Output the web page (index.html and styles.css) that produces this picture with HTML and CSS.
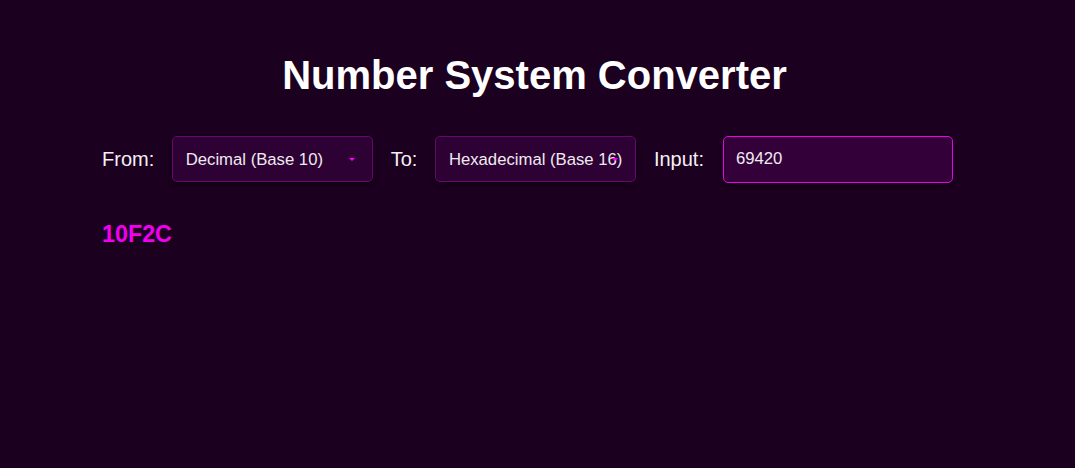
FILE: index.html
```html
<!DOCTYPE html>
<html lang="en">
<head>
<meta charset="utf-8">
<title>Number System Converter</title>
<link rel="stylesheet" href="styles.css">
</head>
<body>
<main class="app">
  <h1 class="title">Number System Converter</h1>
  <div class="controls">
    <label class="label" for="from">From:</label>
    <div class="select-wrap">
      <select id="from" class="select">
        <option>Decimal (Base 10)</option>
      </select>
      <span class="arrow"></span>
    </div>
    <label class="label" for="to">To:</label>
    <div class="select-wrap">
      <select id="to" class="select">
        <option>Hexadecimal (Base 16)</option>
      </select>
      <span class="arrow"></span>
    </div>
    <label class="label" for="inp">Input:</label>
    <input id="inp" class="input" type="text" value="69420">
  </div>
  <div class="result">10F2C</div>
</main>
</body>
</html>
```

FILE: styles.css
```css
html, body {
  margin: 0;
  padding: 0;
  height: 100%;
}
body {
  background: #1c0020;
  font-family: "Liberation Sans", Arial, sans-serif;
  color: #ffffff;
}
.app {
  width: 871px;
  margin: 0 auto;
  padding-top: 52px;
}
.title {
  margin: 0 0 37px 0;
  text-align: center;
  font-size: 40px;
  font-weight: bold;
  line-height: 46px;
  color: #ffffff;
  padding-right: 6px;
}
.controls {
  display: flex;
  align-items: center;
  height: 48px;
}
.label {
  font-size: 20px;
  color: #f6f0f6;
  margin-right: 17.5px;
}
.select-wrap {
  position: relative;
  margin-right: 18px;
}
.select {
  appearance: none;
  -webkit-appearance: none;
  width: 201px;
  height: 46px;
  box-sizing: border-box;
  background: #2d0133;
  border: 1px solid #66096e;
  border-radius: 5px;
  color: #f0eaf0;
  font-family: "Liberation Sans", Arial, sans-serif;
  font-size: 16.7px;
  padding: 0 10px 0 13px;
  box-shadow: 0 3px 8px rgba(0, 0, 0, 0.45);
  outline: none;
}
.arrow {
  position: absolute;
  right: 18px;
  top: 22px;
  width: 0;
  height: 0;
  border-left: 3px solid transparent;
  border-right: 3px solid transparent;
  border-top: 3px solid #ff00ff;
  pointer-events: none;
}
.input {
  width: 230px;
  height: 47px;
  margin-left: 1.5px;
  box-sizing: border-box;
  background: #33003a;
  border: 1px solid #ea00ea;
  border-radius: 5px;
  color: #f0eaf0;
  font-family: "Liberation Sans", Arial, sans-serif;
  font-size: 16.7px;
  padding: 0 12px;
  box-shadow: 0 3px 8px rgba(0, 0, 0, 0.45);
  outline: none;
}
.result {
  margin-top: 38px;
  font-size: 23.3px;
  font-weight: bold;
  color: #f000f0;
}
```
